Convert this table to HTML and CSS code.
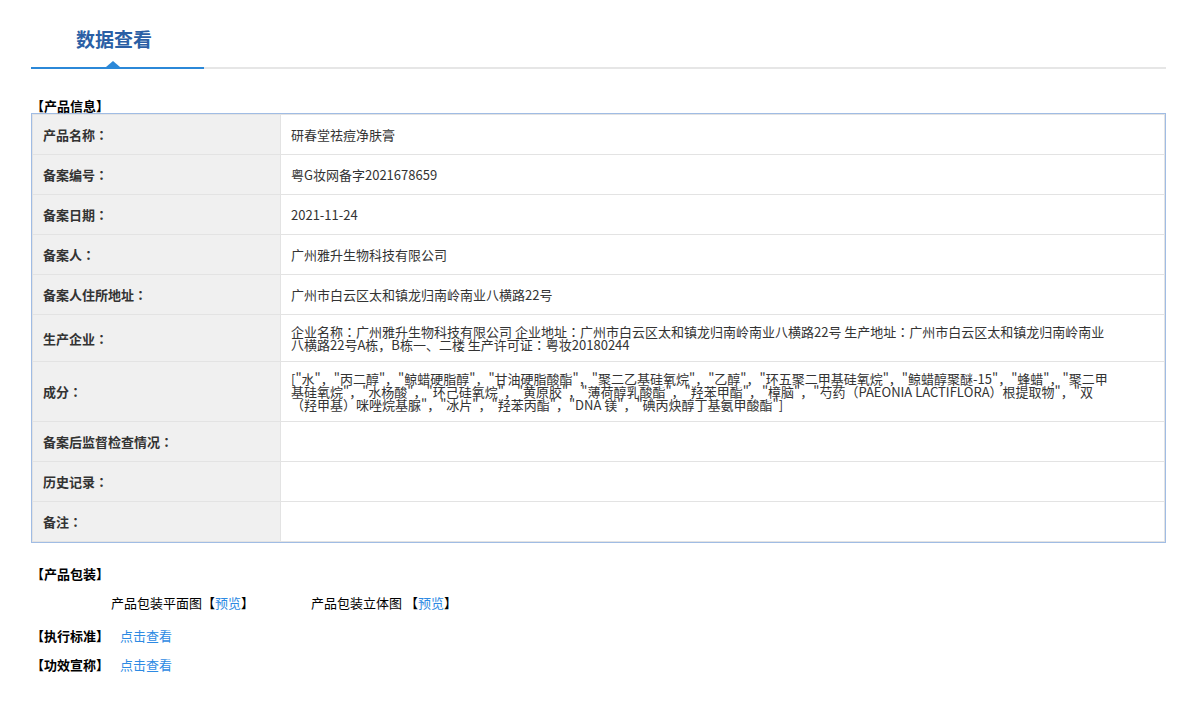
FILE: index.html
```html
<!DOCTYPE html>
<html lang="zh-CN">
<head>
<meta charset="utf-8">
<title>数据查看</title>
<link rel="stylesheet" href="styles.css">
</head>
<body>
<div class="page">
  <div class="tabs">
    <div class="tab active">数据查看<span class="caret"></span></div>
  </div>

  <div class="section-title first">【产品信息】</div>
  <div class="info-box">
    <div class="info">
      <div class="row"><div class="label"><div>产品名称<span class="fw" lang="zh-Hant">：</span></div></div><div class="value"><div>研春堂祛痘净肤膏</div></div></div>
      <div class="row"><div class="label"><div>备案编号<span class="fw" lang="zh-Hant">：</span></div></div><div class="value"><div>粤G妆网备字2021678659</div></div></div>
      <div class="row"><div class="label"><div>备案日期<span class="fw" lang="zh-Hant">：</span></div></div><div class="value"><div>2021-11-24</div></div></div>
      <div class="row"><div class="label"><div>备案人<span class="fw" lang="zh-Hant">：</span></div></div><div class="value"><div>广州雅升生物科技有限公司</div></div></div>
      <div class="row"><div class="label"><div>备案人住所地址<span class="fw" lang="zh-Hant">：</span></div></div><div class="value"><div>广州市白云区太和镇龙归南岭南业八横路22号</div></div></div>
      <div class="row"><div class="label"><div>生产企业<span class="fw" lang="zh-Hant">：</span></div></div><div class="value"><div>企业名称<span class="fw" lang="zh-Hant">：</span>广州雅升生物科技有限公司 企业地址<span class="fw" lang="zh-Hant">：</span>广州市白云区太和镇龙归南岭南业八横路22号 生产地址<span class="fw" lang="zh-Hant">：</span>广州市白云区太和镇龙归南岭南业八横路22号A栋，B栋一、二楼 生产许可证<span class="fw" lang="zh-Hant">：</span>粤妆20180244</div></div></div>
      <div class="row"><div class="label"><div>成分<span class="fw" lang="zh-Hant">：</span></div></div><div class="value"><div>["水"，"丙二醇"，"鲸蜡硬脂醇"，"甘油硬脂酸酯"，"聚二乙基硅氧烷"，"乙醇"，"环五聚二甲基硅氧烷"，"鲸蜡醇聚醚-15"，"蜂蜡"，"聚二甲基硅氧烷"，"水杨酸"，"环己硅氧烷"，"黄原胶"，"薄荷醇乳酸酯"，"羟苯甲酯"，"樟脑"，"芍药（PAEONIA LACTIFLORA）根提取物"，"双（羟甲基）咪唑烷基脲"，"冰片"，"羟苯丙酯"，"DNA 镁"，"碘丙炔醇丁基氨甲酸酯"]</div></div></div>
      <div class="row"><div class="label"><div>备案后监督检查情况<span class="fw" lang="zh-Hant">：</span></div></div><div class="value"></div></div>
      <div class="row"><div class="label"><div>历史记录<span class="fw" lang="zh-Hant">：</span></div></div><div class="value"></div></div>
      <div class="row"><div class="label"><div>备注<span class="fw" lang="zh-Hant">：</span></div></div><div class="value"></div></div>
    </div>
  </div>

  <div class="section-title pack-title">【产品包装】</div>
  <div class="pack-row">
    <span class="pack-item">产品包装平面图【<a class="link" href="#">预览</a>】</span>
    <span class="pack-item">产品包装立体图 【<a class="link" href="#">预览</a>】</span>
  </div>
  <div class="extra-line first-extra"><span class="section-title inline">【执行标准】</span><a class="link more" href="#">点击查看</a></div>
  <div class="extra-line"><span class="section-title inline">【功效宣称】</span><a class="link more" href="#">点击查看</a></div>
</div>
</body>
</html>
```

FILE: styles.css
```css
html, body {
  margin: 0;
  padding: 0;
  background: #fff;
}

body {
  font-family: "Noto Sans CJK SC", sans-serif;
  font-size: 13px;
  color: #333;
}

.fw {
  font-family: "Noto Sans CJK TC", "Noto Sans CJK SC", sans-serif;
}

.page {
  width: 1135px;
  margin-left: 31px;
}

/* Tabs */
.tabs {
  display: flex;
  height: 67px;
  border-bottom: 2px solid #e6e6e6;
}

.tab {
  position: relative;
  box-sizing: border-box;
  width: 173px;
  height: 69px;
  margin-bottom: -2px;
  padding: 28px 0 0 45px;
  font-size: 19px;
  line-height: 21px;
  font-weight: bold;
  color: #2a5fa5;
}

.tab.active {
  border-bottom: 2px solid #2b88d8;
}

.caret {
  position: absolute;
  left: 75px;
  bottom: 0;
  width: 0;
  height: 0;
  border-left: 7px solid transparent;
  border-right: 7px solid transparent;
  border-bottom: 6px solid #2b88d8;
}

/* Section titles */
.section-title {
  font-weight: bold;
  color: #000;
  line-height: 15px;
}

.section-title.first {
  margin-top: 29px;
}

/* Info table */
.info-box {
  border: 1px solid #a0bce4;
}

.info {
  border: 1px solid #e3e3e3;
}

.row {
  display: flex;
}

.row + .row {
  border-top: 1px solid #e3e3e3;
}

.label {
  box-sizing: border-box;
  width: 248px;
  flex: none;
  min-height: 39px;
  padding: 10px;
  display: flex;
  align-items: center;
  background: #f0f0f0;
  border-right: 1px solid #e3e3e3;
  font-weight: bold;
  line-height: 13px;
}

.value {
  box-sizing: border-box;
  flex: 1;
  min-width: 0;
  min-height: 39px;
  padding: 10px 50px 10px 10px;
  display: flex;
  align-items: center;
  line-height: 13px;
}

/* Packaging */
.pack-title {
  margin-top: 23px;
}

.pack-row {
  display: flex;
  margin-top: 14px;
  padding-left: 80px;
  line-height: 15px;
  color: #000;
}

.pack-item {
  width: 200px;
}

.link {
  color: #2d8ae3;
  text-decoration: none;
}

.extra-line {
  line-height: 15px;
  margin-top: 14px;
}

.extra-line.first-extra {
  margin-top: 18px;
}

.section-title.inline {
  display: inline;
}

.more {
  margin-left: 11px;
}
```
